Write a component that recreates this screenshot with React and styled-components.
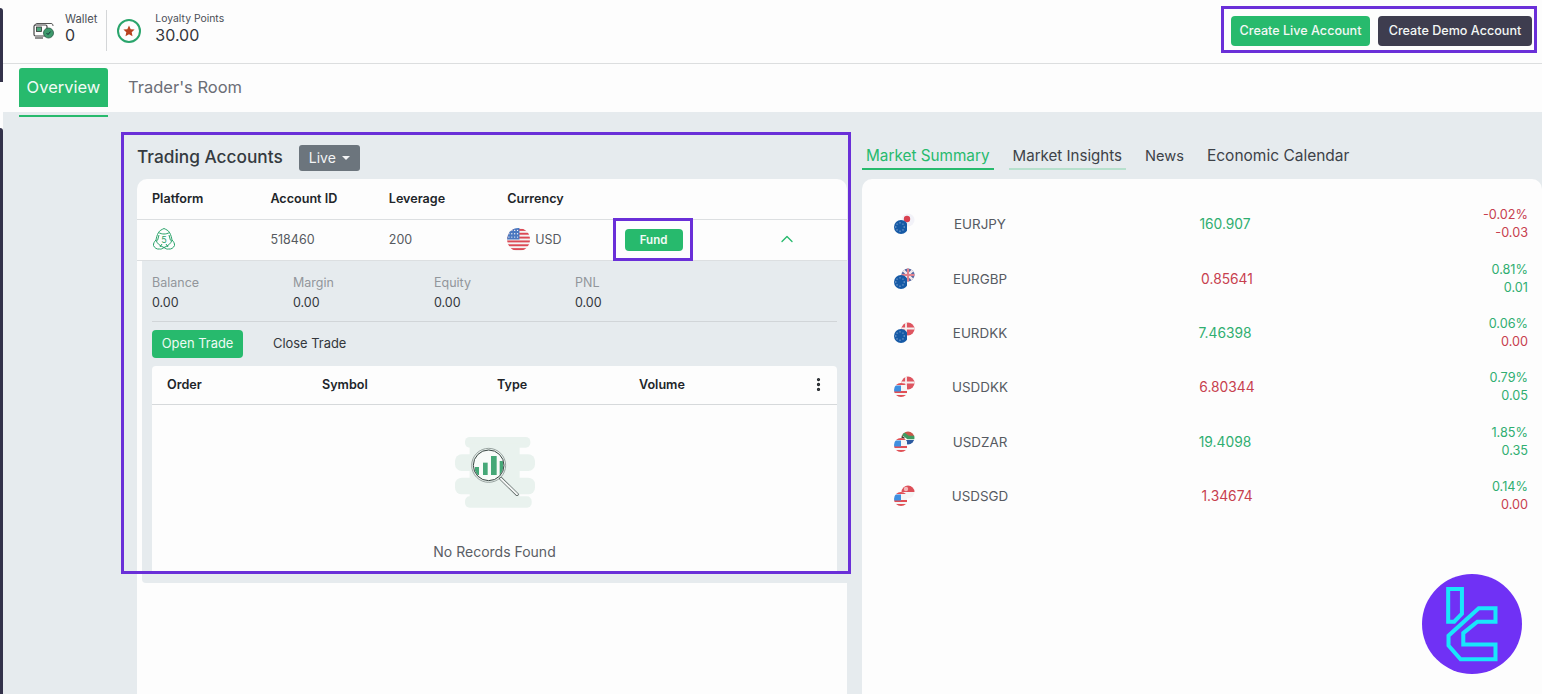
import React from 'react';
import styled, { createGlobalStyle } from 'styled-components';
import { ChevronUp, EllipsisVertical } from 'lucide-react';

const GREEN = '#27ba6d';
const UI = '"Inter", "Liberation Sans", sans-serif';

const Global = createGlobalStyle`
  html, body { margin: 0; padding: 0; height: 694px; overflow: hidden; background: #fdfdfd; }
  body { font-family: ${UI}; color: #212529; }
  * { box-sizing: border-box; }
`;

const Page = styled.div`
  position: relative;
  width: 1542px;
  height: 694px;
  overflow: hidden;
  display: flex;
`;

const Rail = styled.div`
  width: 3px;
  flex: none;
  display: flex;
  flex-direction: column;
`;

const RailPiece = styled.div`
  background: #33324a;
  height: ${(p) => p.$h}px;
  margin-top: ${(p) => p.$top}px;
  border-top-right-radius: 3px;
`;

const Main = styled.div`
  flex: 1;
  min-width: 0;
  display: flex;
  flex-direction: column;
`;

const Header = styled.header`
  height: 64px;
  padding: 0 10px 2px 30px;
  display: flex;
  align-items: center;
  border-bottom: 1px solid #dcdedf;
  background: #fdfdfd;
`;

const Stat = styled.div`
  display: flex;
  align-items: center;
`;

const StatText = styled.div`
  display: flex;
  flex-direction: column;
  margin-left: ${(p) => p.$gap}px;
  margin-bottom: 4px;
`;

const StatLabel = styled.span`
  font-size: ${(p) => p.$size}px;
  line-height: 12px;
  color: #4a4d55;
`;

const StatValue = styled.span`
  font-size: 16px;
  line-height: 20px;
  color: #33363c;
`;

const Divider = styled.div`
  width: 1px;
  height: 41px;
  background: #d4d6d8;
  margin: 0 10px 0 9px;
`;

const Actions = styled.div`
  margin-left: auto;
  display: flex;
  gap: 8px;
`;

const ActionButton = styled.button`
  height: 30px;
  width: ${(p) => p.$w}px;
  border: 0;
  border-radius: 4px;
  padding: 0;
  font: 500 12.6px ${UI};
  color: #f4f7f5;
  background: ${(p) => (p.$dark ? '#3e3d4f' : GREEN)};
`;

const TabBar = styled.nav`
  height: 48px;
  padding: 4px 0 0 16px;
  display: flex;
  background: #fdfdfd;
`;

const PageTab = styled.div`
  width: 89px;
  height: 39px;
  margin-right: 20px;
  padding-bottom: 2px;
  border-radius: 3px 3px 0 0;
  display: flex;
  align-items: center;
  justify-content: ${(p) => (p.$active ? 'center' : 'flex-start')};
  font-size: 16.5px;
  white-space: nowrap;
  color: ${(p) => (p.$active ? '#f0faf5' : '#6b6e76')};
  background: ${(p) => (p.$active ? GREEN : 'transparent')};
`;

const Body = styled.div`
  flex: 1;
  min-height: 0;
  position: relative;
  background: #e6ebee;
  display: grid;
  grid-template-columns: 710px 680px;
  column-gap: 15px;
  padding-left: 134px;
`;

const TabUnderline = styled.div`
  position: absolute;
  left: 16px;
  top: 3px;
  width: 89px;
  height: 2px;
  background: ${GREEN};
`;

const Column = styled.section`
  display: flex;
  flex-direction: column;
  min-height: 0;
`;

const TitleRow = styled.div`
  height: 67px;
  padding-top: 33px;
  display: flex;
  align-items: flex-start;
`;

const Title = styled.h2`
  margin: 0;
  font-size: 17.3px;
  line-height: 24px;
  font-weight: 500;
  color: #343a40;
`;

const LiveButton = styled.div`
  margin-left: 16px;
  width: 61px;
  height: 26px;
  padding-bottom: 1px;
  border-radius: 3px;
  background: #6c757d;
  color: #f3f4f5;
  font-size: 14px;
  display: flex;
  align-items: center;
  justify-content: center;
  gap: 6px;
  &::after {
    content: '';
    border-top: 4px solid #f3f4f5;
    border-left: 4px solid transparent;
    border-right: 4px solid transparent;
  }
`;

const Card = styled.div`
  flex: 1;
  background: #fdfdfd;
  border-radius: 10px 10px 0 0;
  overflow: hidden;
`;

const AccountRow = styled.div`
  display: grid;
  grid-template-columns: repeat(5, 118.4px) 1fr;
  align-items: center;
  height: ${(p) => p.$h}px;
  padding: 0 0 2px 15px;
  border-bottom: 1px solid #dcdfe1;
`;

const HeadCell = styled.div`
  font-size: 12.6px;
  font-weight: 600;
  color: #212529;
`;

const Cell = styled.div`
  display: flex;
  align-items: center;
  font-size: 12.5px;
  color: #565a60;
`;

const CurrencyName = styled.span`
  margin-left: 5px;
`;

const ChevronCell = styled.div`
  display: flex;
  color: ${GREEN};
  padding-left: 33px;
`;

const FundButton = styled.button`
  width: 58px;
  height: 22px;
  margin: 1px 0 0 -1px;
  border: 0;
  border-radius: 4px;
  background: ${GREEN};
  color: #f2faf6;
  padding: 0;
  font: 600 11.5px ${UI};
`;

const Details = styled.div`
  height: 322px;
  margin-left: 5px;
  padding: 14px 10px 0;
  background: #e6ebee;
  border-bottom-left-radius: 4px;
`;

const Stats = styled.div`
  display: grid;
  grid-template-columns: repeat(4, 141px);
  height: 47px;
  border-bottom: 1px solid #d1d5d8;
`;

const StatBox = styled.div`
  display: flex;
  flex-direction: column;
  gap: 5px;
`;

const BoxLabel = styled.span`
  font-size: 12.5px;
  line-height: 15px;
  color: #92969b;
`;

const BoxValue = styled.span`
  font-size: 12.5px;
  line-height: 15px;
  color: #33373c;
`;

const TradeTabs = styled.div`
  display: flex;
  align-items: center;
  margin-top: 8px;
  height: 28px;
`;

const TradeTab = styled.div`
  width: ${(p) => (p.$active ? '91px' : 'auto')};
  height: 28px;
  margin-right: 30px;
  padding-bottom: 2px;
  border-radius: 4px;
  display: flex;
  align-items: center;
  justify-content: center;
  font-size: 12.9px;
  color: ${(p) => (p.$active ? '#eefaf4' : '#33373c')};
  background: ${(p) => (p.$active ? GREEN : 'transparent')};
`;

const TradeTable = styled.div`
  margin-top: 8px;
  height: 207px;
  background: #fdfdfd;
  border-radius: 4px 4px 0 0;
`;

const TradeHead = styled.div`
  height: 39px;
  padding: 0 0 2px 15px;
  display: grid;
  grid-template-columns: 155px 175px 142px 1fr 27px;
  align-items: center;
  border-bottom: 1px solid #d6d9db;
`;

const DotsCell = styled.div`
  display: flex;
  color: #212529;
`;

const Empty = styled.div`
  display: flex;
  flex-direction: column;
  align-items: center;
  padding-top: 32px;
`;

const EmptyIconWrap = styled.div`
  display: flex;
  margin-left: 3px;
`;

const EmptyText = styled.div`
  margin-top: 34px;
  font-size: 14px;
  line-height: 17px;
  color: #5a5e65;
`;

const MarketTabs = styled.div`
  height: 67px;
  padding-top: 32px;
  display: flex;
  gap: 15px;
  align-items: flex-start;
`;

const MarketTab = styled.div`
  height: 26px;
  padding: 0 4px;
  font-size: ${(p) => p.$size}px;
  line-height: 24px;
  white-space: nowrap;
  color: ${(p) => (p.$active ? GREEN : '#3d4248')};
  border-bottom: 2px solid ${(p) => (p.$active ? GREEN : p.$soft ? '#b7e0cd' : 'transparent')};
`;

const MarketList = styled.div`
  padding: 18px 14px 0 31px;
`;

const MarketRow = styled.div`
  display: grid;
  grid-template-columns: 22px 130px 360px 123px;
  align-items: center;
  height: 54.4px;
`;

const PairName = styled.div`
  text-align: center;
  font-size: 13.4px;
  color: #565a62;
`;

const Price = styled.div`
  text-align: center;
  font-size: 13.8px;
  padding-left: ${(p) => (p.$up ? 0 : 4)}px;
  color: ${(p) => (p.$up ? '#2fae70' : '#c7404e')};
`;

const Change = styled.div`
  text-align: right;
  font-size: 12.7px;
  line-height: 18px;
  color: ${(p) => (p.$up ? '#2fae70' : '#c7404e')};
`;

const Mark = styled.div`
  position: absolute;
  left: ${(p) => p.$x}px;
  top: ${(p) => p.$y}px;
  width: ${(p) => p.$w}px;
  height: ${(p) => p.$h}px;
  border: 3px solid #6a2fd8;
  pointer-events: none;
`;

const Badge = styled.svg`
  position: absolute;
  left: 1422px;
  top: 574px;
  width: 100px;
  height: 100px;
`;

const WalletIcon = () => (
  <svg width="22" height="18" viewBox="0 0 22 18">
    <path d="M2 3.5C2 2 3 1.5 4 1.5H18C19.5 1.5 20 2.5 20 4" fill="none" stroke="#555" strokeWidth="1" />
    <rect x="1" y="3" width="13" height="11" rx="1.5" fill="none" stroke="#444" strokeWidth="1.2" />
    <rect x="3.5" y="5" width="5" height="4.5" fill="#4fa77c" stroke="#333" strokeWidth="0.8" />
    <path d="M2 16H10" stroke="#444" strokeWidth="1.2" />
    <circle cx="15.5" cy="11" r="5" fill="#3d9a6c" stroke="#2c5b47" strokeWidth="0.8" />
    <path d="M13.5 11L15 12.5L17.6 9.6" fill="none" stroke="#123" strokeWidth="0.9" />
  </svg>
);

const StarIcon = () => (
  <svg width="24" height="24" viewBox="0 0 24 24">
    <circle cx="12" cy="12" r="11" fill="none" stroke="#2aa56c" strokeWidth="2" />
    <path d="M12 6.5L13.7 10.2L17.6 10.6L14.7 13.3L15.5 17.3L12 15.3L8.5 17.3L9.3 13.3L6.4 10.6L10.3 10.2Z" fill="#b8421f" />
  </svg>
);

const Mt5Icon = () => (
  <svg width="24" height="24" viewBox="0 0 24 24" fill="none" stroke="#27a268" strokeWidth="1">
    <path d="M12 1.5C14 2.5 16.5 3.5 17.5 5.5C19 8 19.5 10.5 20 13C21.5 14.5 22.8 16.5 22.5 18.5C21.5 21 19 22.5 16.5 22C15 22.5 13.5 21.5 12 20.5C10.5 21.5 9 22.5 7.5 22C5 22.5 2.5 21 1.5 18.5C1.2 16.5 2.5 14.5 4 13C4.5 10.5 5 8 6.5 5.5C7.5 3.5 10 2.5 12 1.5Z" />
    <path d="M6.5 5.5C10 7.5 14 7.5 17.5 5.5M4 13C5 16.5 8 19 12 20.5C16 19 19 16.5 20 13" />
    <path d="M7 8L5.5 13.5M17 8L18.5 13.5M8 20L10 17M16 20L14 17" />
    <text x="12" y="16" fontSize="9" textAnchor="middle" fill="#27a268" stroke="none" fontFamily="Inter, sans-serif">5</text>
  </svg>
);

const UsFlagCircle = ({ size }) => (
  <svg width={size} height={size} viewBox="0 0 24 24">
    <defs>
      <clipPath id="usa"><circle cx="12" cy="12" r="12" /></clipPath>
    </defs>
    <g clipPath="url(#usa)">
      <rect width="24" height="24" fill="#f4f4f4" />
      {[1, 5, 9, 13, 17, 21].map((y) => <rect key={y} y={y} width="24" height="2" fill="#dc4a55" />)}
      <rect width="13" height="12" fill="#4a78c0" />
      {[2.5, 6, 9.5].map((y) => [2, 5, 8, 11].map((x) => <circle key={`${x}-${y}`} cx={x} cy={y} r="0.7" fill="#f5f5f5" />))}
    </g>
  </svg>
);

// small circular flags, drawn clipped to a circle at (cx, cy)
const FlagBody = ({ kind }) => {
  if (kind === 'EUR') {
    const dots = [0, 1, 2, 3, 4, 5, 6, 7].map((i) => (
      <circle key={i} cx={7 + 4.2 * Math.cos((i * Math.PI) / 4)} cy={15 + 4.2 * Math.sin((i * Math.PI) / 4)} r="0.65" fill="#9db6d8" />
    ));
    return <><rect y="8" width="14" height="14" fill="#165aa6" />{dots}</>;
  }
  if (kind === 'USD') {
    return (
      <>
        <rect y="8" width="14" height="14" fill="#f5f5f5" />
        <rect y="16" width="14" height="2" fill="#e14f55" />
        <rect y="20" width="14" height="2" fill="#e14f55" />
        <rect y="8" width="14" height="2" fill="#e14f55" />
        <rect y="10.5" width="8" height="6" fill="#3f8fe0" />
      </>
    );
  }
  if (kind === 'JPY') {
    return <><rect x="8" y="1" width="14" height="14" fill="#f2f2f8" /><circle cx="14" cy="7" r="3.2" fill="#d9404f" /></>;
  }
  if (kind === 'GBP') {
    return (
      <>
        <rect x="8" y="1" width="14" height="14" fill="#5a6ba3" />
        <path d="M8 1L22 15M22 1L8 15" stroke="#f0e6ea" strokeWidth="2.4" />
        <path d="M15 1V15M8 8H22" stroke="#e0808c" strokeWidth="2" />
      </>
    );
  }
  if (kind === 'DKK') {
    return (
      <>
        <rect x="8" y="1" width="14" height="14" fill="#de5560" />
        <path d="M13 1V15M8 7.5H22" stroke="#f6f0f0" strokeWidth="1.8" />
      </>
    );
  }
  if (kind === 'ZAR') {
    return (
      <>
        <rect x="8" y="1" width="14" height="5" fill="#c9574a" />
        <rect x="8" y="10" width="14" height="5" fill="#2c5aa0" />
        <path d="M8 2L15 7.5L22 7.5" fill="none" stroke="#3f9a60" strokeWidth="3.5" />
        <path d="M8 5L12 8L8 11Z" fill="#3d3a2c" />
      </>
    );
  }
  return (
    <>
      <rect x="8" y="1" width="14" height="7" fill="#dd4f58" />
      <rect x="8" y="8" width="14" height="7" fill="#f6f4f4" />
      <circle cx="13" cy="5" r="2.2" fill="#f3b7b9" />
    </>
  );
};

const PairFlag = ({ base, quote, id }) => (
  <svg width="22" height="24" viewBox="0 0 22 24">
    <defs>
      <clipPath id={`q-${id}`}><circle cx="15" cy="8" r="6.5" /></clipPath>
      <clipPath id={`b-${id}`}><circle cx="8" cy="15" r="7" /></clipPath>
    </defs>
    <g clipPath={`url(#q-${id})`}><FlagBody kind={quote} /></g>
    <g clipPath={`url(#b-${id})`}><FlagBody kind={base} /></g>
  </svg>
);

const EmptyIcon = () => (
  <svg width="82" height="72" viewBox="0 0 246 216">
    <defs>
      <clipPath id="glass"><circle cx="101" cy="85" r="44" /></clipPath>
    </defs>
    <g fill="#e9f2ee">
      <rect x="30" y="0" width="196" height="32" rx="14" />
      <rect x="44" y="20" width="150" height="180" />
      <rect x="0" y="52" width="240" height="50" rx="20" />
      <rect x="0" y="122" width="240" height="50" rx="20" />
      <rect x="30" y="178" width="200" height="34" rx="14" />
    </g>
    <circle cx="101" cy="85" r="44" fill="#f8fbf9" />
    <g clipPath="url(#glass)" fill="#45a877">
      <rect x="60" y="90" width="12" height="24" />
      <rect x="84" y="77" width="14" height="37" />
      <rect x="108" y="57" width="17" height="57" />
      <rect x="134" y="72" width="12" height="42" />
    </g>
    <circle cx="101" cy="85" r="46" fill="none" stroke="#3b4744" strokeWidth="3" />
    <circle cx="101" cy="85" r="51" fill="none" stroke="#9aa5a2" strokeWidth="3" />
    <path d="M138 125L186 172" stroke="#3e4a47" strokeWidth="10" strokeLinecap="round" />
    <path d="M138 125L186 172" stroke="#f4f6f5" strokeWidth="6" strokeLinecap="round" />
  </svg>
);

const markets = [
  { base: 'EUR', quote: 'JPY', price: '160.907', up: true, pct: '-0.02%', diff: '-0.03', changeUp: false },
  { base: 'EUR', quote: 'GBP', price: '0.85641', up: false, pct: '0.81%', diff: '0.01', changeUp: true },
  { base: 'EUR', quote: 'DKK', price: '7.46398', up: true, pct: '0.06%', diff: '0.00', changeUp: false, mixed: true },
  { base: 'USD', quote: 'DKK', price: '6.80344', up: false, pct: '0.79%', diff: '0.05', changeUp: true },
  { base: 'USD', quote: 'ZAR', price: '19.4098', up: true, pct: '1.85%', diff: '0.35', changeUp: true },
  { base: 'USD', quote: 'SGD', price: '1.34674', up: false, pct: '0.14%', diff: '0.00', changeUp: true, mixed: true },
];

const App = () => (
  <>
    <Global />
    <Page>
      <Rail>
        <RailPiece $top={8} $h={78} />
        <RailPiece $top={46} $h={600} />
      </Rail>
      <Main>
        <Header>
          <Stat>
            <WalletIcon />
            <StatText $gap={10}>
              <StatLabel $size={11.2}>Wallet</StatLabel>
              <StatValue>0</StatValue>
            </StatText>
          </Stat>
          <Divider />
          <Stat>
            <StarIcon />
            <StatText $gap={14}>
              <StatLabel $size={10.4}>Loyalty Points</StatLabel>
              <StatValue>30.00</StatValue>
            </StatText>
          </Stat>
          <Actions>
            <ActionButton $w={139}>Create Live Account</ActionButton>
            <ActionButton $w={154} $dark>Create Demo Account</ActionButton>
          </Actions>
        </Header>
        <TabBar>
          <PageTab $active>Overview</PageTab>
          <PageTab>Trader's Room</PageTab>
        </TabBar>
        <Body>
          <TabUnderline />
          <Column>
            <TitleRow>
              <Title>Trading Accounts</Title>
              <LiveButton>Live</LiveButton>
            </TitleRow>
            <Card>
              <AccountRow $h={41}>
                <HeadCell>Platform</HeadCell>
                <HeadCell>Account ID</HeadCell>
                <HeadCell>Leverage</HeadCell>
                <HeadCell>Currency</HeadCell>
              </AccountRow>
              <AccountRow $h={41}>
                <Cell><Mt5Icon /></Cell>
                <Cell>518460</Cell>
                <Cell>200</Cell>
                <Cell><UsFlagCircle size={23} /><CurrencyName>USD</CurrencyName></Cell>
                <Cell><FundButton>Fund</FundButton></Cell>
                <ChevronCell><ChevronUp size={20} strokeWidth={1.6} /></ChevronCell>
              </AccountRow>
              <Details>
                <Stats>
                  {['Balance', 'Margin', 'Equity', 'PNL'].map((label) => (
                    <StatBox key={label}>
                      <BoxLabel>{label}</BoxLabel>
                      <BoxValue>0.00</BoxValue>
                    </StatBox>
                  ))}
                </Stats>
                <TradeTabs>
                  <TradeTab $active>Open Trade</TradeTab>
                  <TradeTab>Close Trade</TradeTab>
                </TradeTabs>
                <TradeTable>
                  <TradeHead>
                    <HeadCell>Order</HeadCell>
                    <HeadCell>Symbol</HeadCell>
                    <HeadCell>Type</HeadCell>
                    <HeadCell>Volume</HeadCell>
                    <DotsCell><EllipsisVertical size={17} strokeWidth={2.6} /></DotsCell>
                  </TradeHead>
                  <Empty>
                    <EmptyIconWrap><EmptyIcon /></EmptyIconWrap>
                    <EmptyText>No Records Found</EmptyText>
                  </Empty>
                </TradeTable>
              </Details>
            </Card>
          </Column>
          <Column>
            <MarketTabs>
              <MarketTab $active $size={15.3}>Market Summary</MarketTab>
              <MarketTab $soft $size={15.1}>Market Insights</MarketTab>
              <MarketTab $size={14.6}>News</MarketTab>
              <MarketTab $size={15.5}>Economic Calendar</MarketTab>
            </MarketTabs>
            <Card>
              <MarketList>
                {markets.map((m) => (
                  <MarketRow key={m.base + m.quote}>
                    <PairFlag base={m.base} quote={m.quote} id={m.base + m.quote} />
                    <PairName>{m.base + m.quote}</PairName>
                    <Price $up={m.up}>{m.price}</Price>
                    <div>
                      <Change $up={m.mixed ? true : m.changeUp}>{m.pct}</Change>
                      <Change $up={m.mixed ? false : m.changeUp}>{m.diff}</Change>
                    </div>
                  </MarketRow>
                ))}
              </MarketList>
            </Card>
          </Column>
        </Body>
      </Main>
      <Mark $x={1221} $y={6} $w={316} $h={47} />
      <Mark $x={121} $y={132} $w={730} $h={442} />
      <Mark $x={613} $y={218} $w={80} $h={43} />
      <Badge viewBox="67 42 298 298">
        <circle cx="216" cy="191" r="149" fill="#7031f5" />
        <g fill="none" stroke="#19e6fb" strokeWidth="12">
          <path d="M145 87H186V160L163 184H145Z" />
          <path d="M236 144H286V184H232L190 218V252H286V296H182L146 255V226Z" />
        </g>
      </Badge>
    </Page>
  </>
);

export default App;
